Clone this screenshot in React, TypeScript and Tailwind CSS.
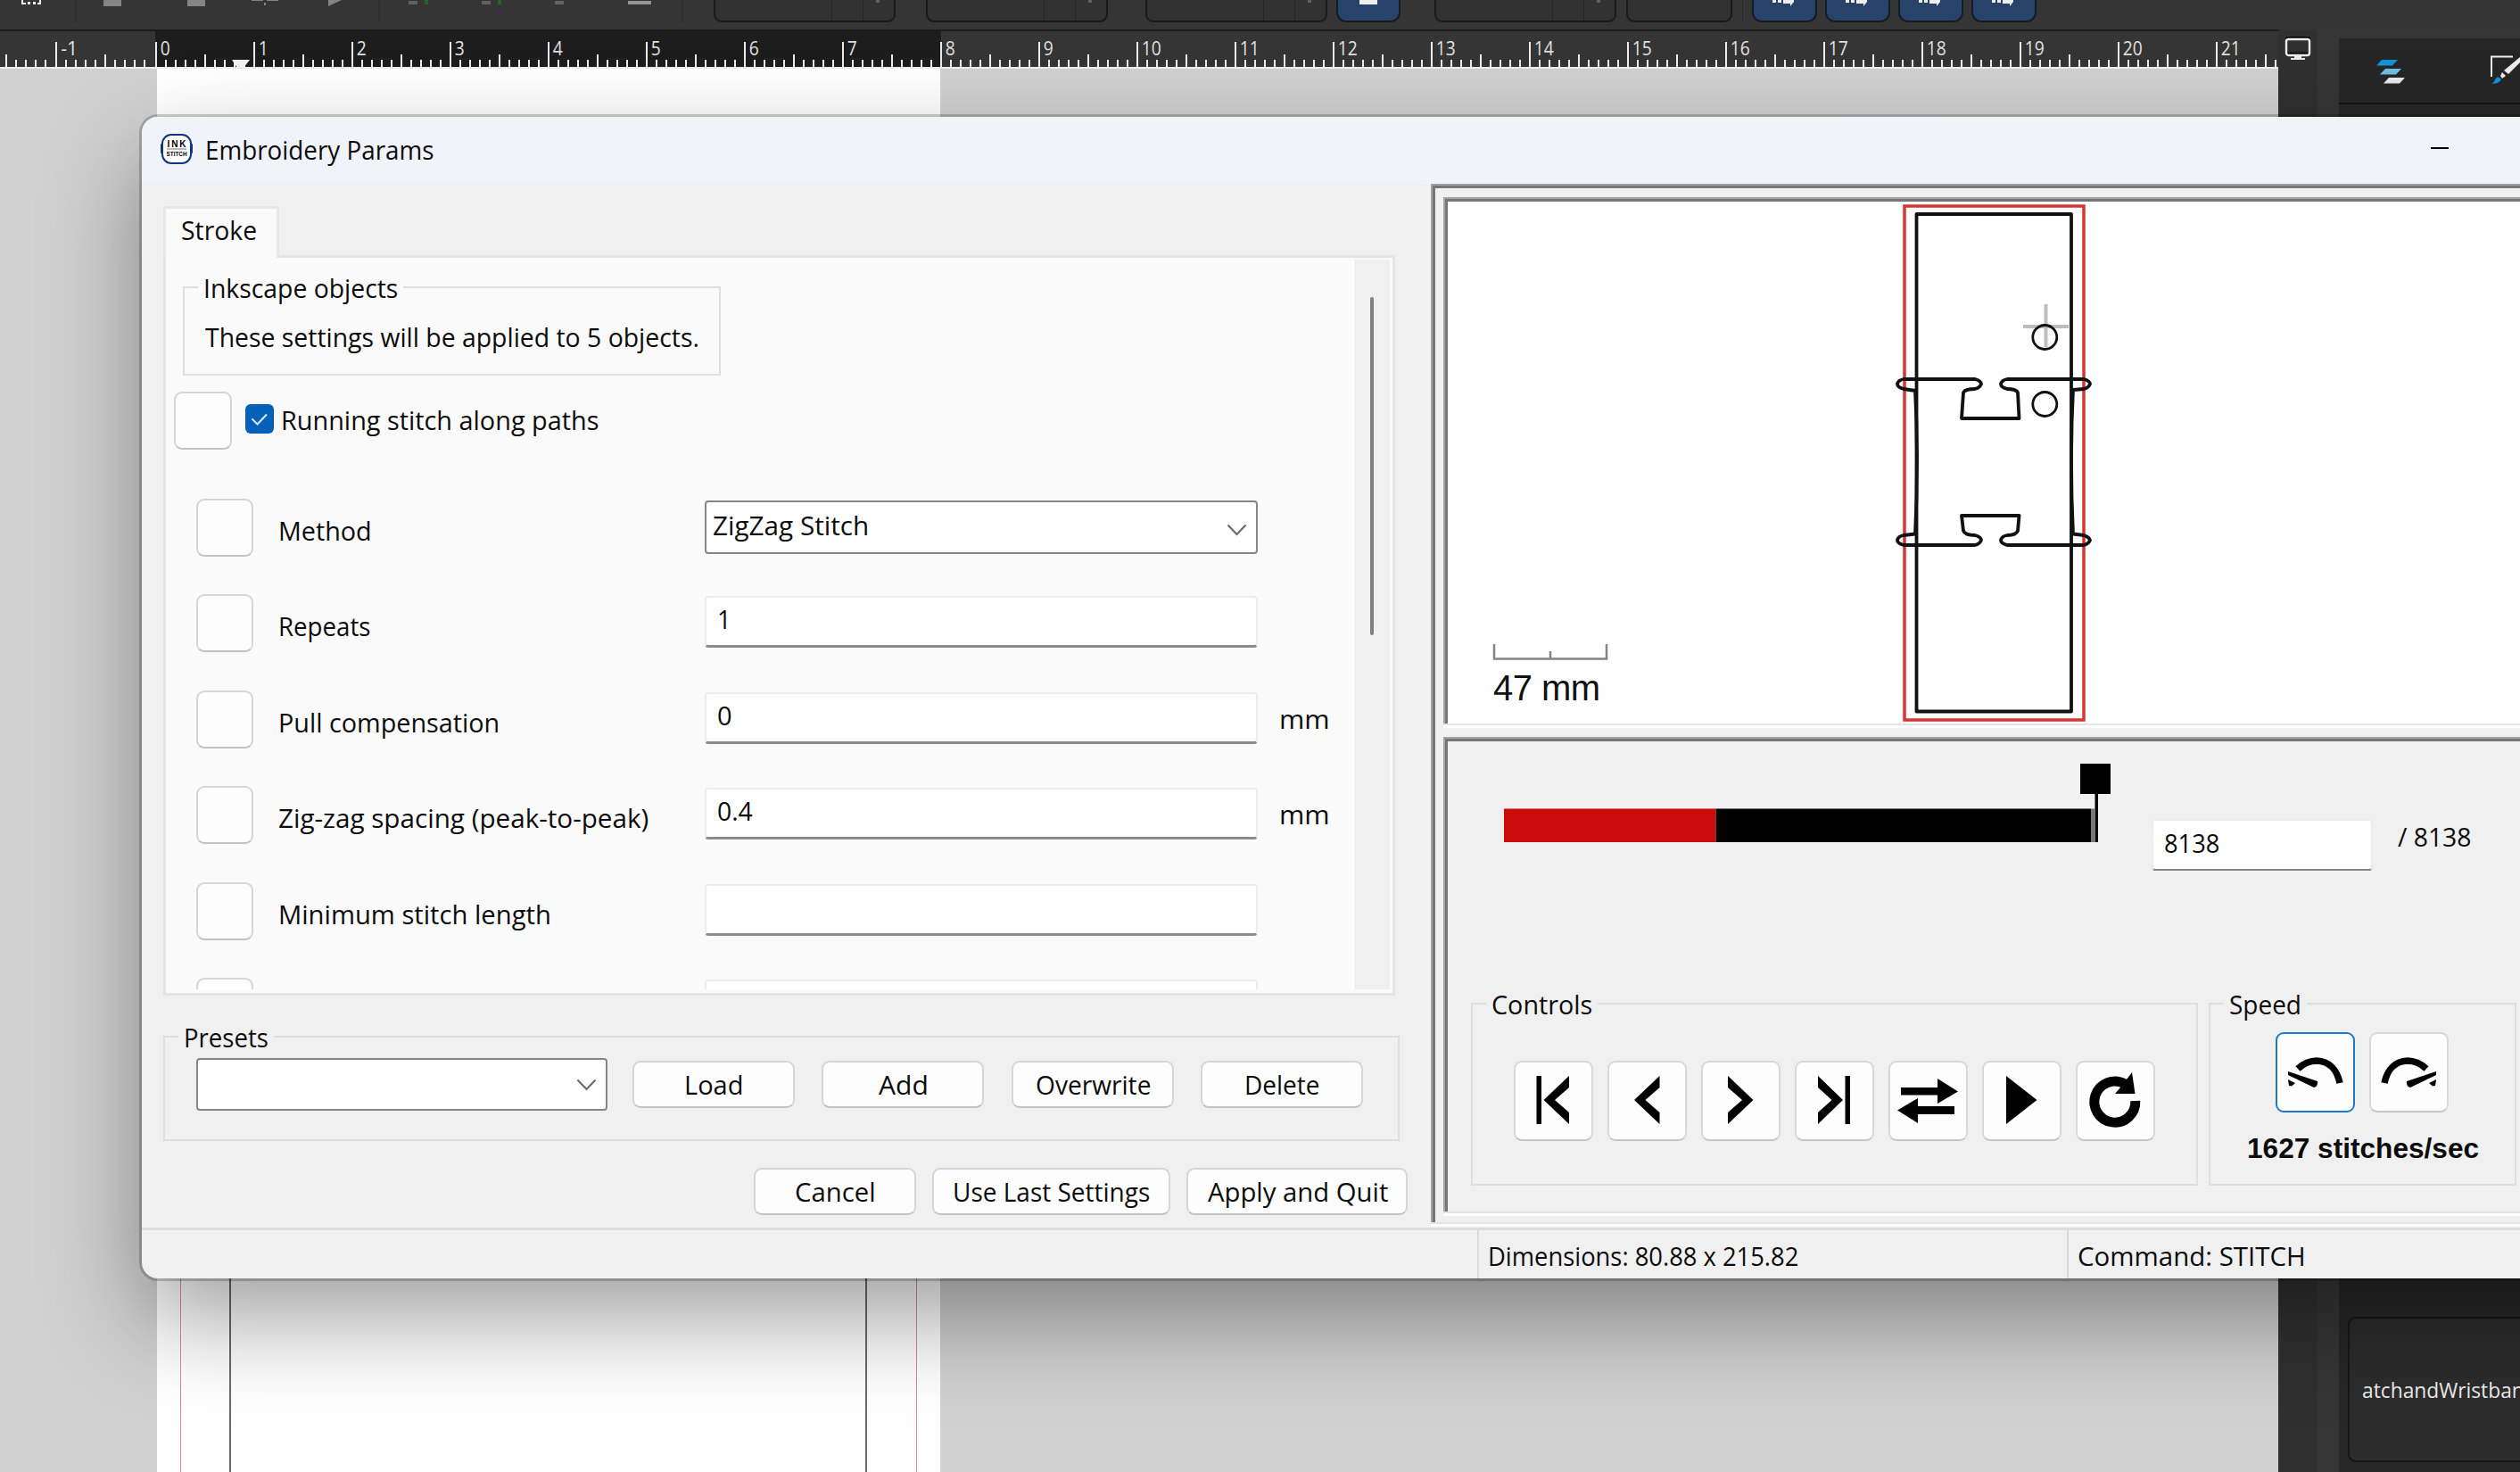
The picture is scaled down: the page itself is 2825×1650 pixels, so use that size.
import React, { useLayoutEffect, useRef, useState } from "react";

/** Single line of text condensed or widened to an exact advance width. */
function T({ w, className = "", children }: { w: number; className?: string; children: string }) {
  const ref = useRef<HTMLSpanElement>(null);
  const [scale, setScale] = useState(1);
  useLayoutEffect(() => {
    if (ref.current) setScale(w / ref.current.offsetWidth);
  }, [w]);
  return (
    <span className={`block h-[40px] shrink-0 leading-[40px] ${className}`} style={{ width: w }}>
      <span ref={ref} className="inline-block origin-left whitespace-pre" style={{ transform: `scaleX(${scale})` }}>
        {children}
      </span>
    </span>
  );
}

const BTN = "shrink-0 rounded-[9px] border-2 border-[#d6d6d6] border-b-[#c2c2c2] bg-[#fdfdfd]";

function PushButton({ className, label, w }: { className: string; label: string; w: number }) {
  return (
    <button className={`flex h-[53px] items-center justify-center ${BTN} ${className}`}>
      <T w={w}>{label}</T>
    </button>
  );
}

function Chevron() {
  return (
    <svg width="23" height="14" viewBox="0 0 23 14" fill="none" stroke="#6b6b6b" strokeWidth="2.2">
      <path d="M1.5 1.5 11.5 12 21.5 1.5" />
    </svg>
  );
}

function Group({ className, bg, label, w, children }: { className: string; bg: string; label: string; w: number; children: React.ReactNode }) {
  return (
    <div className={`shrink-0 border-2 border-[#dedede] ${className}`}>
      <div className={`-mt-[20px] ml-[15px] w-fit px-[6px] ${bg}`}>
        <T w={w}>{label}</T>
      </div>
      {children}
    </div>
  );
}

const rows: { label: string; w: number; value?: string; vw?: number; unit?: boolean; select?: boolean }[] = [
  { label: "Method", w: 105, value: "ZigZag Stitch", vw: 175, select: true },
  { label: "Repeats", w: 103, value: "1", vw: 16 },
  { label: "Pull compensation", w: 248, value: "0", vw: 17, unit: true },
  { label: "Zig-zag spacing (peak-to-peak)", w: 415, value: "0.4", vw: 40, unit: true },
  { label: "Minimum stitch length", w: 306 },
  { label: "", w: 10 },
];

function ParamRow({ row }: { row: (typeof rows)[number] }) {
  return (
    <div className="ml-[34px] flex h-[107.6px] items-start">
      <button className={`h-[65px] w-[64px] ${BTN}`} />
      <div className="mt-[16px] ml-[28px] w-[478px] shrink-0">{row.label && <T w={row.w}>{row.label}</T>}</div>
      {row.select ? (
        <div className="mt-[2px] flex h-[60px] w-[620px] shrink-0 items-start justify-between rounded-[4px] border-2 border-[#868686] bg-white pt-[6px] pr-[10px] pl-[7px]">
          <T w={row.vw!}>{row.value!}</T>
          <span className="mt-[18px]"><Chevron /></span>
        </div>
      ) : (
        <div className="mt-[2px] h-[58px] w-[620px] shrink-0 rounded-[4px] border-2 border-[#ececec] border-b-[3px] border-b-[#8c8c8c] bg-white pt-[4px] pl-[12px]">
          {row.value && <T w={row.vw!}>{row.value}</T>}
        </div>
      )}
      {row.unit && <T w={57} className="mt-[12px] ml-[24px]">mm</T>}
    </div>
  );
}

function IconButton({ children, active }: { children: React.ReactNode; active?: boolean }) {
  return (
    <button className={`h-[90px] w-[89px] shrink-0 rounded-[9px] border-2 bg-[#fdfdfd] ${active ? "border-[#1a7ac9]" : "border-[#d8d8d8] border-b-[#c6c6c6]"}`}>
      <svg className="-m-[2px]" width="89" height="90" viewBox="0 0 89 90">
        {children}
      </svg>
    </button>
  );
}

function Gauge() {
  return (
    <>
      <path d="M25 41C32 34.500 39 32 46 32C60 32.500 69 42 72 57" fill="none" stroke="#000" strokeWidth="7.500" />
      <path d="M14 44 47 55Q47.500 61 43 62L14 48Z" />
      <path d="M14 53 22 57 18 60.500 15 60Z" />
    </>
  );
}

function TitleLogo() {
  return (
    <svg className="mt-[18px] ml-[20px] shrink-0" width="38" height="36" viewBox="0 0 38 36">
      <rect x="1" y="11" width="36" height="13" rx="3" fill="#12357f" />
      <rect x="3" y="2" width="32" height="32" rx="10" fill="#fff" stroke="#12357f" strokeWidth="2" />
      <text x="8.500" y="15.500" textLength="21" fontSize="10" fontWeight="700" fontFamily="Liberation Sans, sans-serif">INK</text>
      <path d="M8 18h22" stroke="#777" strokeWidth="1" />
      <text x="7.500" y="26" textLength="23" lengthAdjust="spacingAndGlyphs" fontSize="7.500" fontWeight="700" fontFamily="Liberation Sans, sans-serif">STITCH</text>
    </svg>
  );
}

function Design() {
  return (
    <svg className="block" width="1207" height="595" viewBox="1618 221 1207 595" fill="none">
      <rect x="2135" y="231" width="201" height="576" stroke="#d93434" strokeWidth="3.500" />
      <path d="M2293.500 341V389M2268 366H2319" stroke="#bdbdbd" strokeWidth="4" />
      <g stroke="#111" strokeWidth="3.800" strokeLinejoin="round">
        <rect x="2148.500" y="240" width="173.500" height="557.500" />
        <circle cx="2292.300" cy="378" r="13.500" strokeWidth="2.800" />
        <circle cx="2292.300" cy="453" r="13.500" strokeWidth="2.800" />
        <path d="M2134 425H2214Q2221 427 2221 430.500Q2219 435 2214 436Q2203 436 2201 440L2199 469H2263.500L2262 440Q2260 436 2250 436Q2243 434 2243 430.500Q2244 426 2250 425H2336Q2343 427 2343 430.500Q2341 435 2336 436L2324 437Q2320 516 2324 598.500L2336 600Q2342 602 2343 605.500Q2341 610 2336 611H2250Q2243 609 2243 605.500Q2244 601 2250 600Q2260 600 2262 595L2263.500 578H2199L2201 595Q2203 600 2214 600Q2221 602 2221 605.500Q2219 610 2214 611H2134Q2127 609 2127 605.500Q2128 601 2134 600L2147 598.500Q2151 516 2147 438L2134 436Q2127 434 2127 430.500Q2128 426 2134 425Z" />
      </g>
      <path d="M1675 722V738.500H1801V722M1738 730V738" stroke="#858585" strokeWidth="2.500" />
      <text x="1674" y="785" textLength="120" fill="#111" fontSize="40" fontFamily="Liberation Sans, sans-serif">47 mm</text>
    </svg>
  );
}

const units = Array.from({ length: 25 }, (_, i) => i - 2);
function Ruler() {
  const at = (n: number) => (n < 0 ? 174.5 + n * 111.3 : 174.8 + n * 110);
  return (
    <svg className="block h-[42px] w-[2554px]" viewBox="0 35 2554 42">
      {units.map((n) => (
        <g key={n}>
          {Array.from({ length: 10 }, (_, k) => {
            const x = Math.round(at(n) + k * 11) - 1;
            const h = k === 0 ? 28 : k === 5 ? 14 : 8;
            return <rect key={k} x={x} y={75 - h} width="2" height={h} fill="#ececec" />;
          })}
          {n > -2 && n < 22 && (
            <text x={at(n) + 5} y="61.500" fontSize="21" textLength={n < 0 ? 19 : n < 10 ? 11 : 22} lengthAdjust="spacingAndGlyphs" fill="#e0e0e0">
              {n}
            </text>
          )}
        </g>
      ))}
      <path d="M260 67H280L273 76H266Z" fill="#f2f2f2" />
      <rect x="0" y="75" width="2554" height="2" fill="#ececec" />
    </svg>
  );
}

function Spin({ className, plain }: { className: string; plain?: boolean }) {
  return (
    <div className={`flex h-[25px] shrink-0 justify-end rounded-b-[9px] border-2 border-t-0 border-[#1a1a1a] bg-[#323232] ${className}`}>
      {!plain && (
        <div className="flex w-[70px] border-l border-[#262626]">
          <div className="ml-[34px] w-[35px] border-l border-[#262626] pl-[14px]">
            <div className="h-[3px] w-[4px] bg-[#606060]" />
          </div>
        </div>
      )}
    </div>
  );
}

const BLUE = "h-[25px] shrink-0 rounded-b-[11px] border-2 border-t-0 border-[#161c24] bg-[#27436a]";

function SnapButton({ className }: { className: string }) {
  return (
    <div className={`w-[73px] ${BLUE} ${className}`}>
      <svg className="ml-[21px] block" width="28" height="8" viewBox="0 0 28 8" fill="#eee">
        <path d="M0 0h4v3H0zM6 0h4v3H6zM12 0h12v2L20 7V4h-8z" />
      </svg>
    </div>
  );
}

function Sep({ className }: { className: string }) {
  return <div className={`h-[25px] w-px shrink-0 bg-[#2a2a2a] ${className}`} />;
}

function Toolbar() {
  return (
    <div className="flex h-[33px] w-full items-start bg-[#353535]">
      <svg className="block shrink-0" width="800" height="25" viewBox="0 0 800 25">
        <path d="M24 0h2v3h3v2h-5zM31 2h3v3h-3zM37 2h3v3h-3zM46 0h-2v3h-2v2h4z" fill="#eee" />
        <path d="M116 0h20v7h-20zM210 0h20v7h-20zM282 0h13v1h-13zM299 0h13v1h-13zM296 3h2v3h-2zM368 0h15L368 7z" fill="#858585" />
        <path d="M458 1h10v4h-10zM540 1h10v4h-10zM622 1h10v4h-10z" fill="#626262" />
        <path d="M476 0h4v5h-4zM558 0h4v5h-4z" fill="#226329" />
        <path d="M704 1h26v4h-26z" fill="#969696" />
        <path d="M85 0v25M425 0v25M765 0v25" stroke="#2a2a2a" />
      </svg>
      <Spin className="w-[204px]" />
      <Spin className="ml-[34px] w-[204px]" />
      <Spin className="ml-[42px] w-[204px]" />
      <div className={`ml-[10px] w-[72px] ${BLUE}`}>
        <div className="ml-[24px] h-[5px] w-[20px] bg-[#eee]" />
      </div>
      <Spin className="ml-[38px] w-[204px]" />
      <Spin plain className="ml-[11px] w-[119px]" />
      <Sep className="ml-[11px]" />
      <SnapButton className="ml-[10px]" />
      <SnapButton className="ml-[9px]" />
      <SnapButton className="ml-[9px]" />
      <SnapButton className="ml-[9px]" />
    </div>
  );
}

function Editor() {
  return (
    <div className="flex h-[1650px] flex-col">
      <Toolbar />
      <div className="flex h-[1617px]">
        <div className="flex w-[2554px] shrink-0 flex-col">
          <div className="border-t-2 border-[#1c1c1c] bg-[linear-gradient(90deg,#353535_174px,#1d1d1d_174px,#1d1d1d_1055px,#353535_1055px)]">
            <Ruler />
          </div>
          <div className="flex grow bg-[#d1d1d1] pl-[176px]">
            <div className="flex w-[878px] bg-white pt-[900px]">
              <div className="ml-[26px] w-[55px] border-l border-[#d98a94]" />
              <div className="w-[715px] border-x-2 border-[#6a6a6a]" />
              <div className="w-[56px] border-r border-[#d98a94]" />
            </div>
          </div>
        </div>
        <div className="w-[44px] shrink-0 bg-[#303030]">
          <svg className="mt-[8px] ml-[7px] block" width="30" height="27" viewBox="0 0 30 27" fill="none">
            <path d="M2 5V3Q2 1 4 1H26Q28 1 28 3V5" stroke="#000" strokeWidth="2" />
            <rect x="2" y="3" width="26" height="18" rx="2.500" stroke="#ececec" strokeWidth="2.400" />
            <path d="M4 18.500H26" stroke="#000" strokeWidth="1.500" />
            <path d="M11 21h8v3h4v2H7v-2h4z" fill="#ececec" />
          </svg>
        </div>
        <div className="w-[24px] shrink-0 bg-[#363636]" />
        <div className="flex w-[203px] shrink-0 flex-col bg-[#363636] pt-[10px]">
          <div className="flex h-[74px] shrink-0 justify-between border-b-2 border-[#141414] bg-[#262626]">
            <svg className="mt-[24px] ml-[42px]" width="32" height="27" viewBox="0 0 32 27">
              <path d="M6 0H24L18 6.500H0Z" fill="#1193dc" />
              <path d="M10 10H28L22 16.500H4Z" fill="#72bde3" />
              <path d="M14 20H32L26 26.500H8Z" fill="#e8e8e8" />
            </svg>
            <svg className="mt-[19px]" width="33" height="33" viewBox="0 0 33 33">
              <path d="M1 24V1.500H25" fill="none" stroke="#eee" strokeWidth="2" />
              <path d="M33 2V8L20 21L15 17Z" fill="#eee" />
              <path d="M13 19L17 23L13 26L11 23Z" fill="#eee" />
              <path d="M8 24L12 27Q10 32 1 32Q5 30 5 27Z" fill="#1193dc" />
            </svg>
          </div>
          <div className="grow bg-[#272727]">
            <div className="mt-[1359px] ml-[10px] flex h-[163px] w-[240px] items-center rounded-[9px] border-2 border-[#161616] bg-[#2c2c2c] pl-[14px]">
              <T w={196} className="text-[23px] text-[#ededed]">atchandWristband</T>
            </div>
          </div>
        </div>
      </div>
    </div>
  );
}

function ParamsPane() {
  return (
    <div className="w-[1445px] shrink-0 pt-[25px] pl-[24px]">
      <div className="relative z-10 -mb-[3px] h-[58px] w-[130px] border-[3px] border-b-0 border-[#e7e7e7] bg-[#fafafa] pt-[4px] pl-[17px]">
        <T w={85}>Stroke</T>
      </div>
      <div className="flex h-[830px] w-[1381px] border-[3px] border-[#e5e5e5] bg-[#fafafa]">
        <div className="h-[820px] w-[1330px] shrink-0 overflow-hidden pt-[32px]">
          <Group className="ml-[19px] h-[100px] w-[603px]" bg="bg-[#fafafa]" label="Inkscape objects" w={218}>
            <T w={554} className="mt-[15px] ml-[23px]">These settings will be applied to 5 objects.</T>
          </Group>
          <div className="mt-[18px] ml-[9px] flex items-start">
            <button className={`h-[65px] w-[65px] ${BTN}`} />
            <span className="mt-[14px] ml-[15px] flex h-[33px] w-[32px] items-center justify-center rounded-[6px] bg-[#0560b9]">
              <svg width="20" height="16" viewBox="0 0 20 16" fill="none" stroke="#dcebf8" strokeWidth="2">
                <path d="M1.500 7.500 7.500 13.500 18 2.500" />
              </svg>
            </span>
            <T w={356} className="mt-[12px] ml-[8px]">Running stitch along paths</T>
          </div>
          <div className="mt-[54.5px]">
            {rows.map((r, i) => (
              <ParamRow key={i} row={r} />
            ))}
          </div>
        </div>
        <div className="mt-[2px] h-[818px] w-[42px] border-l-2 border-white bg-[#f0f0f0] pt-[42px]">
          <div className="ml-[18px] h-[379px] w-[4px] rounded-full bg-[#808080]" />
        </div>
      </div>
      <Group className="mt-[45px] h-[118px] w-[1386px]" bg="bg-[#f0f0f0]" label="Presets" w={95}>
        <div className="mt-[3px] ml-[35px] flex items-center">
          <div className="flex h-[59px] w-[461px] items-center justify-end rounded-[4px] border-2 border-[#868686] bg-white pr-[10px]">
            <Chevron />
          </div>
          <PushButton className="ml-[28px] w-[182px]" label="Load" w={66} />
          <PushButton className="ml-[30px] w-[182px]" label="Add" w={56} />
          <PushButton className="ml-[31px] w-[182px]" label="Overwrite" w={129} />
          <PushButton className="ml-[30px] w-[182px]" label="Delete" w={85} />
        </div>
      </Group>
      <div className="mt-[30px] ml-[662px] flex gap-[18px]">
        <PushButton className="w-[182px]" label="Cancel" w={91} />
        <PushButton className="w-[267px]" label="Use Last Settings" w={221} />
        <PushButton className="w-[248px]" label="Apply and Quit" w={202} />
      </div>
    </div>
  );
}

const SUNKEN = "shadow-[inset_0_-3px_0_#fff,inset_0_-5px_0_#e3e3e3,inset_2px_2px_0_#a3a3a3,inset_5px_5px_0_#767676]";

function Simulator() {
  return (
    <div className={`flex h-[1169px] w-[1221px] shrink-0 flex-col pt-[15px] pl-[14px] ${SUNKEN}`}>
      <div className="relative h-[595px] shrink-0 bg-white">
        <Design />
        <div className={`pointer-events-none absolute inset-0 ${SUNKEN}`} />
      </div>
      <div className={`mt-[10px] h-[537px] shrink-0 pt-[30px] ${SUNKEN}`}>
        <div className="flex h-[268px] items-start">
          <svg className="ml-[68px] block shrink-0" width="682" height="90" viewBox="1686 856 682 90">
            <rect x="1686" y="906.500" width="237.500" height="37.500" fill="#cc0b0b" />
            <rect x="1923.500" y="906.500" width="421" height="37.500" />
            <rect x="2344.500" y="906.500" width="3.500" height="37.500" fill="#777" />
            <rect x="2348.500" y="889" width="3.500" height="55" />
            <rect x="2332" y="856" width="34" height="34" />
          </svg>
          <div className="mt-[62px] ml-[44px] h-[58px] w-[248px] shrink-0 rounded-[4px] border-2 border-[#ececec] border-b-[#868686] bg-white pt-[5px] pl-[12px]">
            <T w={62}>8138</T>
          </div>
          <T w={83} className="mt-[62px] ml-[28px]">/ 8138</T>
        </div>
        <div className="flex">
          <Group className="ml-[31px] h-[205px] w-[815px]" bg="bg-[#f0f0f0]" label="Controls" w={113}>
            <div className="mt-[43px] ml-[46px] flex gap-[16px]">
              <IconButton><path d="M25.500 17h5.500v54h-5.500zM33.500 44 62 17V30L46 44 62 58V71z" /></IconButton>
              <IconButton><path d="M30 44 58.500 17V30L42.500 44 58.500 58V71z" /></IconButton>
              <IconButton><path d="M58.500 44 30 17V30L46 44 30 58V71z" /></IconButton>
              <IconButton><path d="M54 44 26 17V30L41.500 44 26 58V71zM56.500 17H62v54h-5.500z" /></IconButton>
              <IconButton><path d="M14 30H55V20L78 34.500 55 48V38.500H14zM74 51H33V42L10 55.500 33 70V60H74z" /></IconButton>
              <IconButton><path d="M27 17 61.500 44 27 71z" /></IconButton>
              <IconButton>
                <path d="M66.800 45A23 23 0 1 1 55 26" fill="none" stroke="#000" strokeWidth="11" />
                <path d="M63 13 66.500 37H44L50 30z" />
              </IconButton>
            </div>
          </Group>
          <Group className="ml-[12px] h-[205px] w-[345px]" bg="bg-[#f0f0f0]" label="Speed" w={81}>
            <div className="mt-[11px] ml-[73px] flex gap-[16px]">
              <IconButton active><Gauge /></IconButton>
              <IconButton><g transform="translate(89 0) scale(-1 1)"><Gauge /></g></IconButton>
            </div>
            <T w={260} className="mt-[21px] ml-[41px] font-['Liberation_Sans',sans-serif] text-[31px] font-bold">1627 stitches/sec</T>
          </Group>
        </div>
      </div>
    </div>
  );
}

function ParamsDialog() {
  return (
    <div className="absolute top-[131px] left-[159px] h-[1302px] w-[2900px] overflow-hidden rounded-[18px] bg-[#f0f0f0] shadow-[0_0_0_3px_rgba(0,0,0,0.2),0_45px_110px_rgba(0,0,0,0.38)]">
      <div className="flex h-[75px] items-start bg-linear-to-r from-[#f1f3fb] to-[#f1f3f9]">
        <TitleLogo />
        <T w={256} className="mt-[17px] ml-[13px]">Embroidery Params</T>
        <div className="mt-[34px] ml-[2239px] h-[2px] w-[20px] shrink-0 bg-black" />
      </div>
      <div className="flex h-[1170px]">
        <ParamsPane />
        <Simulator />
      </div>
      <div className="flex h-[57px] border-t-[3px] border-[#dcdcdc]">
        <div className="w-[1497px] shrink-0" />
        <div className="w-[661px] shrink-0 border-l-2 border-[#d9d9d9] pt-[9px] pl-[10px]">
          <T w={348}>Dimensions: 80.88 x 215.82</T>
        </div>
        <div className="grow border-l-2 border-[#d9d9d9] pt-[9px] pl-[10px]">
          <T w={256}>Command: STITCH</T>
        </div>
      </div>
    </div>
  );
}

export default function App() {
  return (
    <div className="relative h-[1650px] w-[2825px] overflow-hidden bg-[#353535] font-['Open_Sans',sans-serif] text-[29px] text-[#0c0c0c]">
      <Editor />
      <ParamsDialog />
    </div>
  );
}
